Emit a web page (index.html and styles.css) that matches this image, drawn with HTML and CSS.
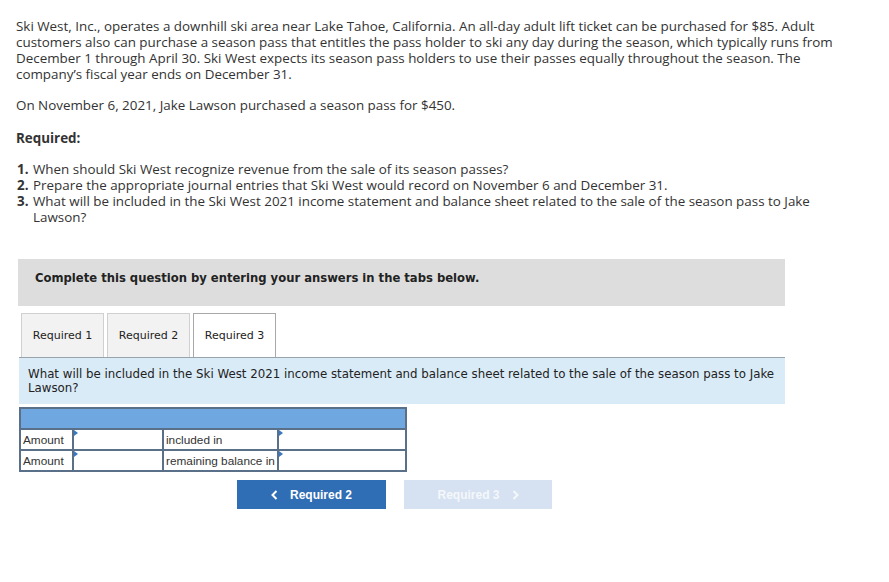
FILE: index.html
```html
<!DOCTYPE html>
<html>
<head>
<meta charset="utf-8">
<link rel="stylesheet" href="styles.css">
</head>
<body>
<div class="page">
  <div class="problem">
    <p class="para">Ski West, Inc., operates a downhill ski area near Lake Tahoe, California. An all-day adult lift ticket can be purchased for $85. Adult customers also can purchase a season pass that entitles the pass holder to ski any day during the season, which typically runs from December 1 through April 30. Ski West expects its season pass holders to use their passes equally throughout the season. The company’s fiscal year ends on December 31.</p>
    <p class="para gap">On November 6, 2021, Jake Lawson purchased a season pass for $450.</p>
    <p class="para req">Required:</p>
    <ol class="reqlist">
      <li><b>1.</b><span>When should Ski West recognize revenue from the sale of its season passes?</span></li>
      <li><b>2.</b><span>Prepare the appropriate journal entries that Ski West would record on November 6 and December 31.</span></li>
      <li><b>3.</b><span>What will be included in the Ski West 2021 income statement and balance sheet related to the sale of the season pass to Jake Lawson?</span></li>
    </ol>
  </div>

  <div class="widget">
    <div class="instruct">Complete this question by entering your answers in the tabs below.</div>
    <div class="tabs">
      <div class="tab">Required 1</div>
      <div class="tab">Required 2</div>
      <div class="tab active">Required 3</div>
    </div>
    <div class="qpanel">What will be included in the Ski West 2021 income statement and balance sheet related to the sale of the season pass to Jake Lawson?</div>

    <table class="answer">
      <tr class="head"><td colspan="4"></td></tr>
      <tr>
        <td class="lbl">Amount</td>
        <td class="inp"></td>
        <td class="lbl2">included in</td>
        <td class="inp wide"></td>
      </tr>
      <tr>
        <td class="lbl">Amount</td>
        <td class="inp"></td>
        <td class="lbl2">remaining balance in</td>
        <td class="inp wide"></td>
      </tr>
    </table>

    <div class="navs">
      <div class="btn prev"><svg class="chev" width="7" height="10" viewBox="0 0 7 10"><polyline points="5.5,1 1.5,5 5.5,9" fill="none" stroke="#ffffff" stroke-width="2"/></svg>Required 2</div>
      <div class="btn next">Required 3<svg class="chev" width="7" height="10" viewBox="0 0 7 10"><polyline points="1.5,1 5.5,5 1.5,9" fill="none" stroke="#f4f7fb" stroke-width="2"/></svg></div>
    </div>
  </div>
</div>
</body>
</html>
```

FILE: styles.css
```css
html, body {
  margin: 0;
  padding: 0;
  background: #ffffff;
}

.page {
  width: 889px;
}

.problem {
  padding: 18px 0 0 16px;
  width: 830px;
  font-family: "Open Sans", "Liberation Sans", sans-serif;
  font-size: 13.4px;
  line-height: 16px;
  color: #333333;
}

.para {
  margin: 0;
}

.gap {
  margin-top: 15px;
}

.req {
  margin-top: 17px;
  font-weight: bold;
}

.reqlist {
  list-style: none;
  margin: 15px 0 0 0;
  padding: 0;
}

.reqlist li {
  display: flex;
}

.reqlist li b {
  width: 17px;
  flex: none;
  text-align: left;
  padding-left: 1px;
  box-sizing: border-box;
}

.widget {
  margin-top: 34px;
  padding-left: 18px;
}

.instruct {
  width: 767px;
  height: 47px;
  box-sizing: border-box;
  background: #dddddd;
  padding: 12px 0 0 17px;
  font-family: "DejaVu Sans", Verdana, sans-serif;
  font-weight: bold;
  font-size: 11.6px;
  color: #222222;
}

.tabs {
  display: flex;
  gap: 3px;
  margin-top: 7px;
  padding-left: 3px;
  position: relative;
  z-index: 1;
}

.tab {
  width: 83px;
  height: 44px;
  box-sizing: border-box;
  border: 1px solid #d0d0d0;
  border-bottom: none;
  background: #f2f2f2;
  font-family: "DejaVu Sans", Verdana, sans-serif;
  font-size: 11px;
  color: #222222;
  display: flex;
  align-items: center;
  justify-content: center;
}

.tab.active {
  background: #ffffff;
  border-color: #a8a8a8;
  margin-bottom: -1px;
}

.qpanel {
  margin-left: 1px;
  width: 766px;
  height: 47px;
  box-sizing: border-box;
  border-top: 1px solid #9aa3ab;
  background: #daebf8;
  padding: 9px 0 0 9px;
  font-family: "DejaVu Sans", Verdana, sans-serif;
  font-size: 11.8px;
  line-height: 14px;
  color: #222222;
}

.answer {
  margin: 3px 0 0 1px;
  border-collapse: collapse;
  width: 388px;
  font-family: "Liberation Sans", Arial, sans-serif;
  font-size: 11.8px;
  color: #333333;
  border: 2px solid #5a7089;
}

.answer td {
  border: 2px solid #5a7089;
  height: 21px;
  padding: 0 0 0 2px;
  box-sizing: border-box;
}

.answer .head td {
  background: #6fa8e0;
  height: 21px;
}

.answer .lbl {
  width: 53px;
}

.answer .inp {
  width: 90px;
  position: relative;
}

.answer .inp.wide {
  width: 128px;
}

.answer .lbl2 {
  width: 115px;
}

.answer .inp::before {
  content: "";
  position: absolute;
  left: 0;
  top: 0;
  border-left: 4px solid #3a78c2;
  border-top: 3px solid transparent;
  border-bottom: 3px solid transparent;
}

.navs {
  display: flex;
  gap: 18px;
  margin: 8px 0 0 219px;
}

.btn {
  width: 149px;
  height: 29px;
  box-sizing: border-box;
  display: flex;
  align-items: center;
  justify-content: center;
  font-family: "Liberation Sans", Arial, sans-serif;
  font-weight: bold;
  font-size: 12px;
  color: #ffffff;
}

.btn.prev {
  background: #2f6db5;
}

.btn.next {
  width: 148px;
  background: #d6e2f1;
  color: #f4f7fb;
}

.prev .chev {
  margin-right: 12px;
}

.next .chev {
  margin-left: 12px;
}
```
